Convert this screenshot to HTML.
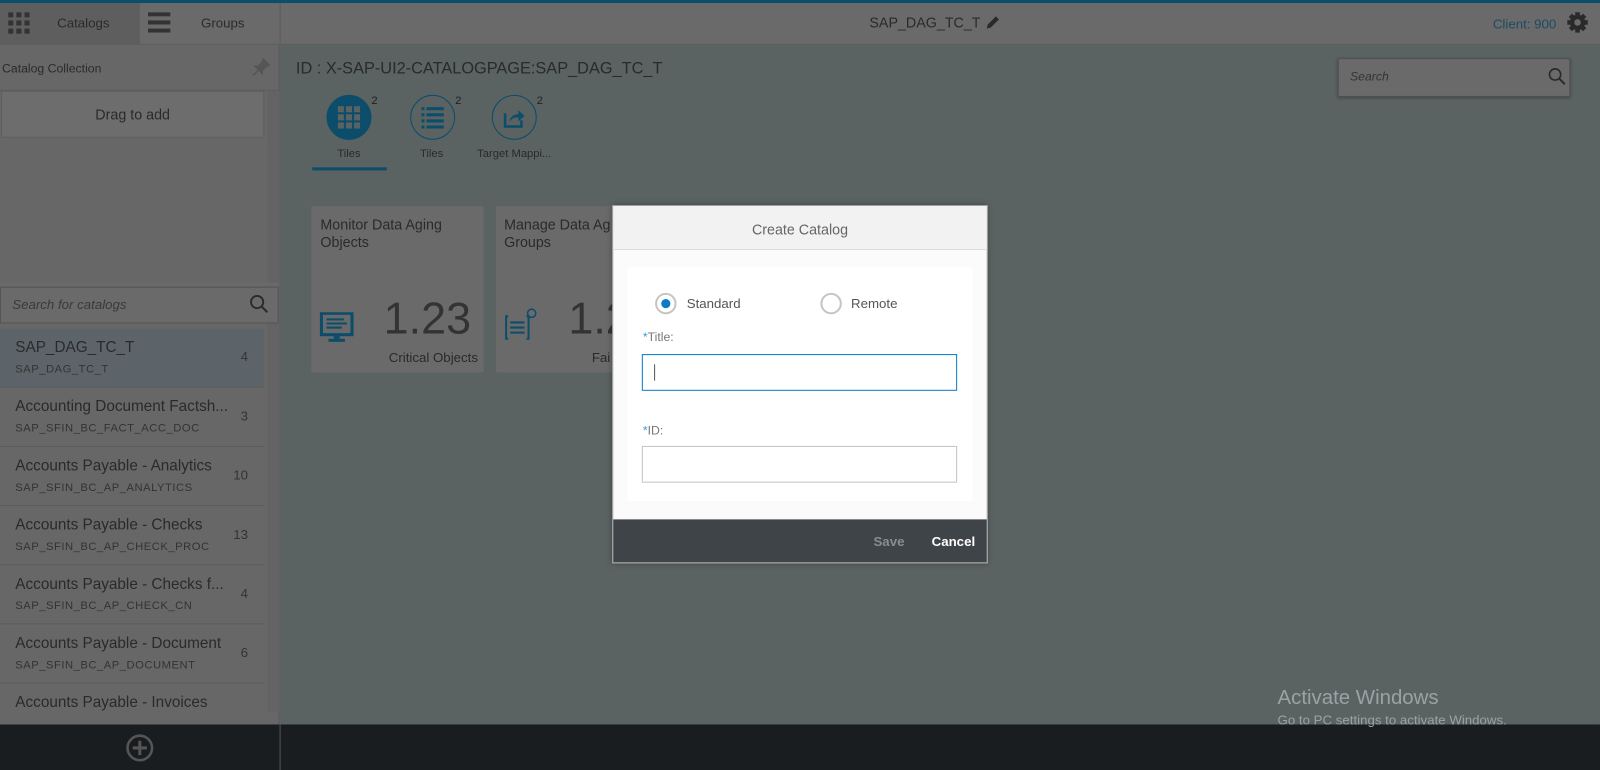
<!DOCTYPE html>
<html><head><meta charset="utf-8"><style>
*{box-sizing:border-box;margin:0;padding:0}
html,body{width:1600px;height:770px;overflow:hidden;background:#5a6262;font-family:"Liberation Sans",sans-serif}
#w{position:absolute;left:0;top:0;width:1568px;height:755px;transform:scale(1.0204);transform-origin:0 0;background:#5a6262}
.a{position:absolute}
.item{position:absolute;left:0;width:259px;height:58px;background:#676767;border-bottom:1px solid #5c5c5c}
.item .t{position:absolute;left:15px;top:10px;font-size:15px;color:#2a2a2a;white-space:nowrap}
.item .s{position:absolute;left:15px;top:34px;font-size:11px;color:#333;letter-spacing:.5px}
.item .n{position:absolute;right:16px;top:20px;font-size:13px;color:#333}
.circ{position:absolute;width:44px;height:44px;border-radius:50%;border:1.5px solid #0b4d6b}
.sup{position:absolute;font-size:11px;color:#222}
.lbl{position:absolute;font-size:11px;color:#2a2a2a;text-align:center}
.tile{position:absolute;top:202px;height:163px;width:169px;background:#6a6a6a;border-radius:2px}
</style></head><body><div id="w">
<div class="a" style="left:0;top:0;width:1568px;height:3px;background:#0b4d6b"></div>
<div class="a" style="left:0;top:3px;width:1568px;height:41px;background:#6a6a6a;border-bottom:1px solid #5e5e5e"></div>
<div class="a" style="left:0;top:3px;width:137px;height:41px;background:#5e5e5e"></div>
<div class="a" style="left:274px;top:3px;width:1px;height:41px;background:#5c5c5c"></div>
<svg class="a" style="left:8px;top:12px" width="22" height="22"><g fill="#333"><rect x="0" y="0" width="5" height="5"/><rect x="8" y="0" width="5" height="5"/><rect x="16" y="0" width="5" height="5"/><rect x="0" y="8" width="5" height="5"/><rect x="8" y="8" width="5" height="5"/><rect x="16" y="8" width="5" height="5"/><rect x="0" y="16" width="5" height="5"/><rect x="8" y="16" width="5" height="5"/><rect x="16" y="16" width="5" height="5"/></g></svg>
<div class="a" style="left:56px;top:15px;font-size:13px;color:#2a2a2a">Catalogs</div>
<svg class="a" style="left:145px;top:12px" width="22" height="20"><g fill="#333"><rect y="0" width="22" height="4"/><rect y="8" width="22" height="4"/><rect y="16" width="22" height="4"/></g></svg>
<div class="a" style="left:197px;top:15px;font-size:13px;color:#2a2a2a">Groups</div>
<div class="a" style="left:852px;top:14px;font-size:14px;color:#2a2a2a">SAP_DAG_TC_T</div>
<svg class="a" style="left:965px;top:14px" width="16" height="16"><path d="M2 14 L3 10 L11 2 L14 5 L6 13 Z" fill="#2a2a2a"/></svg>
<div class="a" style="left:1463px;top:16px;font-size:13px;color:#1e4a66">Client: 900</div>
<svg class="a" style="left:1535px;top:11px" width="22" height="22" viewBox="0 0 22 22"><g fill="#2a2a2a"><circle cx="11" cy="11" r="7.5"/><g stroke="#2a2a2a" stroke-width="4.5"><line x1="11" y1="1" x2="11" y2="21"/><line x1="1" y1="11" x2="21" y2="11"/><line x1="4" y1="4" x2="18" y2="18"/><line x1="18" y1="4" x2="4" y2="18"/></g></g><circle cx="11" cy="11" r="3.2" fill="#6a6a6a"/></svg>
<!-- left panel -->
<div class="a" style="left:0;top:44px;width:274px;height:666px;background:#676767;border-right:1px solid #5c5c5c"></div>
<div class="a" style="left:262px;top:88px;width:12px;height:610px;background:#636363"></div>
<div class="a" style="left:2px;top:60px;font-size:12px;color:#2a2a2a">Catalog Collection</div>
<svg class="a" style="left:246px;top:56px" width="20" height="20"><path d="M12 2 L18 8 L15 9 L11 13 L11 16 L4 9 L7 9 L11 5 Z M7 13 L2 18" fill="#555" stroke="#555" stroke-width="1.5"/></svg>
<div class="a" style="left:0;top:88px;width:274px;height:1px;background:#5c5c5c"></div>
<div class="a" style="left:1px;top:89px;width:258px;height:46px;background:#6d6d6d;border:1px solid #5e5e5e"></div>
<div class="a" style="left:1px;top:104px;width:258px;text-align:center;font-size:14px;color:#2a2a2a">Drag to add</div>
<div class="a" style="left:0;top:277px;width:274px;height:3px;background:#6a6a6a"></div>
<div class="a" style="left:0;top:281px;width:273px;height:36px;border:1px solid #555;background:#6a6a6a"></div>
<div class="a" style="left:12px;top:291px;font-size:13px;font-style:italic;color:#3a3a3a">Search for catalogs</div>
<svg class="a" style="left:244px;top:288px" width="20" height="20"><circle cx="8" cy="8" r="6" fill="none" stroke="#2a2a2a" stroke-width="1.8"/><line x1="12.5" y1="12.5" x2="18" y2="18" stroke="#2a2a2a" stroke-width="2"/></svg>
<div class="item" style="top:322px;background:#5d6469"><div class="t">SAP_DAG_TC_T</div><div class="s">SAP_DAG_TC_T</div><div class="n">4</div></div>
<div class="item" style="top:380px"><div class="t">Accounting Document Factsh...</div><div class="s">SAP_SFIN_BC_FACT_ACC_DOC</div><div class="n">3</div></div>
<div class="item" style="top:438px"><div class="t">Accounts Payable - Analytics</div><div class="s">SAP_SFIN_BC_AP_ANALYTICS</div><div class="n">10</div></div>
<div class="item" style="top:496px"><div class="t">Accounts Payable - Checks</div><div class="s">SAP_SFIN_BC_AP_CHECK_PROC</div><div class="n">13</div></div>
<div class="item" style="top:554px"><div class="t">Accounts Payable - Checks f...</div><div class="s">SAP_SFIN_BC_AP_CHECK_CN</div><div class="n">4</div></div>
<div class="item" style="top:612px"><div class="t">Accounts Payable - Document</div><div class="s">SAP_SFIN_BC_AP_DOCUMENT</div><div class="n">6</div></div>
<div class="item" style="top:670px;height:28px;overflow:hidden;border:none"><div class="t">Accounts Payable - Invoices</div><div class="n">-</div></div>
<div class="a" style="left:0;top:710px;width:1568px;height:45px;background:#1a1d20"></div>
<div class="a" style="left:274px;top:710px;width:1px;height:45px;background:#555"></div>
<svg class="a" style="left:123px;top:719px" width="28" height="28"><circle cx="14" cy="14" r="12" fill="none" stroke="#555" stroke-width="2.5"/><path d="M14 7 V21 M7 14 H21" stroke="#555" stroke-width="3"/></svg>
<!-- main -->
<div class="a" style="left:290px;top:59px;font-size:16px;color:#2a2a2a">ID : X-SAP-UI2-CATALOGPAGE:SAP_DAG_TC_T</div>
<div class="circ" style="left:320px;top:93px;background:#0b4d6b"></div>
<svg class="a" style="left:331px;top:104px" width="22" height="22"><g fill="#5a6262"><rect x="0" y="0" width="6" height="6"/><rect x="8" y="0" width="6" height="6"/><rect x="16" y="0" width="6" height="6"/><rect x="0" y="8" width="6" height="6"/><rect x="8" y="8" width="6" height="6"/><rect x="16" y="8" width="6" height="6"/><rect x="0" y="16" width="6" height="6"/><rect x="8" y="16" width="6" height="6"/><rect x="16" y="16" width="6" height="6"/></g></svg>
<div class="sup" style="left:364px;top:93px">2</div>
<div class="circ" style="left:402px;top:93px"></div>
<svg class="a" style="left:413px;top:104px" width="22" height="22"><g fill="#0b4d6b"><rect x="0" y="1" width="3" height="3"/><rect x="5" y="1" width="17" height="3"/><rect x="0" y="7" width="3" height="3"/><rect x="5" y="7" width="17" height="3"/><rect x="0" y="13" width="3" height="3"/><rect x="5" y="13" width="17" height="3"/><rect x="0" y="19" width="3" height="3"/><rect x="5" y="19" width="17" height="3"/></g></svg>
<div class="sup" style="left:446px;top:93px">2</div>
<div class="circ" style="left:482px;top:93px"></div>
<svg class="a" style="left:493px;top:104px" width="22" height="22"><path d="M2 7 V20 H18 V14" fill="none" stroke="#0b4d6b" stroke-width="2.5"/><path d="M6 16 C7 10 11 8 15 8 V4 L21 9.5 L15 15 V11 C11 11 8 12 6 16 Z" fill="#0b4d6b"/></svg>
<div class="sup" style="left:526px;top:93px">2</div>
<div class="lbl" style="left:312px;top:145px;width:60px">Tiles</div>
<div class="lbl" style="left:393px;top:145px;width:60px">Tiles</div>
<div class="lbl" style="left:464px;top:145px;width:80px">Target Mappi...</div>
<div class="a" style="left:306px;top:164px;width:73px;height:3px;background:#0b4d6b"></div>
<div class="a" style="left:1311px;top:57px;width:228px;height:38px;background:#6a6a6a;border:1px solid #4e4e4e;box-shadow:0 1px 3px rgba(0,0,0,.3)"></div>
<div class="a" style="left:1323px;top:68px;font-size:12px;font-style:italic;color:#333">Search</div>
<svg class="a" style="left:1517px;top:66px" width="18" height="18"><circle cx="7" cy="7" r="5.5" fill="none" stroke="#2a2a2a" stroke-width="1.6"/><line x1="11" y1="11" x2="16.5" y2="16.5" stroke="#2a2a2a" stroke-width="2"/></svg>
<div class="tile" style="left:305px"></div>
<div class="a" style="left:314px;top:212px;font-size:14px;color:#2a2a2a;line-height:17px">Monitor Data Aging<br>Objects</div>
<svg class="a" style="left:313px;top:306px" width="34" height="30"><rect x="2" y="1" width="30" height="21" fill="none" stroke="#0b4d6b" stroke-width="3"/><g stroke="#0b4d6b" stroke-width="2"><line x1="7" y1="7" x2="24" y2="7"/><line x1="7" y1="11" x2="27" y2="11"/><line x1="7" y1="15" x2="22" y2="15"/></g><rect x="14" y="22" width="6" height="4" fill="#0b4d6b"/><rect x="9" y="26" width="16" height="3" fill="#0b4d6b"/></svg>
<div class="a" style="left:376px;top:288px;font-size:44px;color:#333">1.23</div>
<div class="a" style="left:381px;top:343px;font-size:13px;color:#2a2a2a">Critical Objects</div>
<div class="tile" style="left:486px;width:120px"></div>
<div class="a" style="left:494px;top:212px;font-size:14px;color:#2a2a2a;line-height:17px">Manage Data Ag<br>Groups</div>
<svg class="a" style="left:494px;top:300px" width="34" height="34"><path d="M4 10 H2 V32 H4 M22 10 H24 V32 H22" fill="none" stroke="#0b4d6b" stroke-width="2"/><g stroke="#0b4d6b" stroke-width="2"><line x1="6" y1="16" x2="20" y2="16"/><line x1="6" y1="21" x2="20" y2="21"/><line x1="6" y1="26" x2="20" y2="26"/></g><circle cx="27" cy="7" r="4" fill="none" stroke="#0b4d6b" stroke-width="1.5"/></svg>
<div class="a" style="left:557px;top:288px;font-size:44px;color:#333">1.2</div>
<div class="a" style="left:580px;top:343px;font-size:13px;color:#2a2a2a">Fai</div>
<!-- dialog -->
<div class="a" style="left:600px;top:201px;width:368px;height:351px;background:#fbfbfb;border:1px solid #9a9a9a;box-shadow:0 0 6px rgba(0,0,0,.3)"></div>
<div class="a" style="left:601px;top:202px;width:366px;height:43px;background:#f2f2f2;border-bottom:1px solid #ddd"></div>
<div class="a" style="left:601px;top:217px;width:366px;text-align:center;font-size:14px;color:#666">Create Catalog</div>
<div class="a" style="left:615px;top:262px;width:338px;height:229px;background:#fff"></div>
<div class="a" style="left:642px;top:287px;width:21px;height:21px;border-radius:50%;border:2px solid #c5c5c5;background:#fff"></div>
<div class="a" style="left:648px;top:293px;width:9px;height:9px;border-radius:50%;background:#0a7cc8"></div>
<div class="a" style="left:673px;top:290px;font-size:13px;color:#555">Standard</div>
<div class="a" style="left:804px;top:287px;width:21px;height:21px;border-radius:50%;border:2px solid #c5c5c5;background:#fff"></div>
<div class="a" style="left:834px;top:290px;font-size:13px;color:#555">Remote</div>
<div class="a" style="left:630px;top:323px;font-size:12px;color:#777"><span style="color:#3a9ad9">*</span>Title:</div>
<div class="a" style="left:629px;top:347px;width:309px;height:36px;border:1px solid #0a7cc8;background:#fff"></div>
<div class="a" style="left:641px;top:357px;width:1px;height:16px;background:#555"></div>
<div class="a" style="left:630px;top:415px;font-size:12px;color:#777"><span style="color:#3a9ad9">*</span>ID:</div>
<div class="a" style="left:629px;top:437px;width:309px;height:36px;border:1px solid #c4c4c4;background:#fff"></div>
<div class="a" style="left:601px;top:509px;width:366px;height:42px;background:#3f4449"></div>
<div class="a" style="left:856px;top:523px;font-size:13px;font-weight:bold;color:#8a8d90">Save</div>
<div class="a" style="left:913px;top:523px;font-size:13px;font-weight:bold;color:#fff">Cancel</div>
<div class="a" style="left:1252px;top:673px;font-size:20px;color:#9aa3a3">Activate Windows</div>
<div class="a" style="left:1252px;top:698px;font-size:13px;color:#9aa3a3">Go to PC settings to activate Windows.</div>
</div></body></html>
